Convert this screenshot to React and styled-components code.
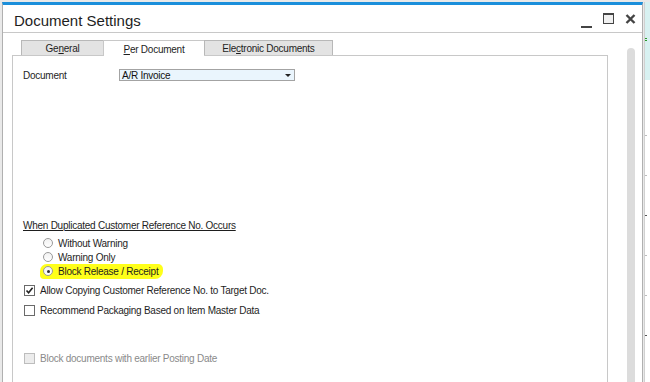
import React from "react";
import styled, { createGlobalStyle, css } from "styled-components";

const GlobalStyle = createGlobalStyle`
  html, body {
    margin: 0;
    padding: 0;
    background: #e9e9e9;
    font-family: "Liberation Sans", Arial, sans-serif;
  }
`;

const Page = styled.div`
  display: flex;
  width: 650px;
  height: 382px;
  padding: 2px 0 0 2px;
  box-sizing: border-box;
  overflow: hidden;
`;

const Window = styled.div`
  width: 641px;
  flex-shrink: 0;
  background: #fff;
  border-top: 3px solid #1b8fdb;
  border-left: 1px solid #b0b0b0;
  border-right: 1px solid #b0b0b0;
  box-sizing: border-box;
  display: flex;
  flex-direction: column;
`;

const TitleBar = styled.div`
  height: 27px;
  display: flex;
  align-items: center;
  padding: 0 0 0 11px;
  border-bottom: 1px solid #c8c8c8;
`;

const Title = styled.div`
  flex: 1;
  font-size: 15px;
  color: #1e1e1e;
  padding-top: 3px;
`;

const Controls = styled.div`
  display: flex;
  align-items: center;
  gap: 11px;
  margin-right: 6px;
`;

const Minimize = styled.div`
  width: 11px;
  height: 12px;
  border-bottom: 2px solid #444;
  box-sizing: border-box;
  margin-top: 6px;
`;

const Maximize = styled.div`
  width: 11px;
  height: 11px;
  border: 1.5px solid #444;
  border-top-width: 2px;
  background: #f0f0f0;
  box-sizing: border-box;
`;

const Body = styled.div`
  flex: 1;
  display: flex;
  min-height: 0;
`;

const Main = styled.div`
  width: 596px;
  margin-left: 9px;
  display: flex;
  flex-direction: column;
`;

const TabRow = styled.div`
  display: flex;
  padding-left: 9px;
  margin-top: 7px;
  position: relative;
  z-index: 1;
`;

const Tab = styled.div`
  width: ${(p) => p.w}px;
  height: 15px;
  box-sizing: border-box;
  border: 1px solid #b8b8b8;
  border-bottom: none;
  margin-left: -1px;
  background: #e3e3e3;
  font-size: 10px;
  letter-spacing: -0.25px;
  color: #1e1e1e;
  display: flex;
  align-items: center;
  justify-content: center;
  padding-top: 1px;
  ${(p) =>
    p.active &&
    css`
      background: #fff;
      height: 16px;
      margin-bottom: -1px;
      border-color: #c8c8c8;
    `}
  &:first-child {
    margin-left: 0;
  }
`;

const Panel = styled.div`
  flex: 1;
  border: 1px solid #c8c8c8;
  border-bottom: none;
  padding: 13px 0 0 10px;
  font-size: 10px;
  letter-spacing: -0.25px;
  color: #1e1e1e;
`;

const FieldRow = styled.div`
  display: flex;
  align-items: center;
  height: 12px;
`;

const Label = styled.div`
  width: 96px;
`;

const Select = styled.div`
  width: 176px;
  height: 12px;
  box-sizing: border-box;
  border: 1px solid #a3a3a3;
  background: #eaf5fd;
  display: flex;
  align-items: center;
  justify-content: space-between;
  padding: 0 3px 0 2px;
  color: #111;
`;

const Arrow = styled.span`
  width: 0;
  height: 0;
  border-left: 3px solid transparent;
  border-right: 3px solid transparent;
  border-top: 3px solid #222;
`;

const Heading = styled.div`
  margin-top: 139px;
  height: 12px;
  line-height: 12px;
  text-decoration: underline;
`;

const OptionRow = styled.div`
  display: flex;
  align-items: center;
  height: 14px;
  gap: 5px;
  margin-top: ${(p) => p.top || 0}px;
  margin-left: ${(p) => p.indent || 0}px;
  color: ${(p) => (p.disabled ? "#8a8a8a" : "#1e1e1e")};
`;

const Highlight = styled.div`
  display: inline-flex;
  align-items: center;
  gap: 5px;
  height: 15px;
  margin-left: -3px;
  padding: 0 5px 0 3px;
  background: #ffff1a;
  border-radius: 7px 5px 8px 4px;
`;

const Radio = styled.span`
  width: 10px;
  height: 10px;
  border-radius: 50%;
  border: 1px solid #9a9a9a;
  box-sizing: border-box;
  background: linear-gradient(#f2f2f2, #fff);
  display: flex;
  align-items: center;
  justify-content: center;
  &::after {
    content: "";
    width: 3px;
    height: 3px;
    border-radius: 50%;
    background: ${(p) => (p.checked ? "#333" : "transparent")};
  }
`;

const Box = styled.span`
  width: 11px;
  height: 11px;
  margin-left: 1px;
  box-sizing: border-box;
  border: 1px solid ${(p) => (p.disabled ? "#bdbdbd" : "#6a6a6a")};
  background: ${(p) => (p.disabled ? "#ececec" : "#fff")};
  display: flex;
  align-items: center;
  justify-content: center;
`;

const Scrollbar = styled.div`
  width: 8px;
  margin: 15px 0 0 19px;
  background: #dcdcdc;
  border-radius: 4px 4px 0 0;
`;

const Neighbour = styled.div`
  flex: 1;
  display: flex;
  flex-direction: column;
  border-left: 1px solid #d0d0d0;
  margin-left: 1px;
`;

const NeighbourTop = styled.div`
  height: 78px;
  background: #d8f1f1;
  position: relative;
`;

const NeighbourRest = styled.div`
  flex: 1;
  background: #fff;
  position: relative;
`;

const Tick = styled.div`
  position: absolute;
  left: 0;
  top: ${(p) => p.y}px;
  width: 2px;
  height: 1px;
  background: ${(p) => p.c || "#bbb"};
`;

function CloseIcon() {
  return (
    <svg width="11" height="10" viewBox="0 0 11 10">
      <path d="M1.5 1 L9.5 9 M9.5 1 L1.5 9" stroke="#444" strokeWidth="2.4" />
    </svg>
  );
}

function Check() {
  return (
    <svg width="9" height="9" viewBox="0 0 9 9">
      <path d="M1.5 4.5 L3.6 6.8 L7.6 1.8" fill="none" stroke="#222" strokeWidth="1.6" />
    </svg>
  );
}

export default function App() {
  return (
    <>
      <GlobalStyle />
      <Page>
        <Window>
          <TitleBar>
            <Title>Document Settings</Title>
            <Controls>
              <Minimize />
              <Maximize />
              <CloseIcon />
            </Controls>
          </TitleBar>
          <Body>
            <Main>
              <TabRow>
                <Tab w={83}>
                  <span>
                    Ge<u>n</u>eral
                  </span>
                </Tab>
                <Tab w={102} active>
                  <span>
                    <u>P</u>er Document
                  </span>
                </Tab>
                <Tab w={129}>
                  <span>
                    Ele<u>c</u>tronic Documents
                  </span>
                </Tab>
              </TabRow>
              <Panel>
                <FieldRow>
                  <Label>Document</Label>
                  <Select>
                    <span>A/R Invoice</span>
                    <Arrow />
                  </Select>
                </FieldRow>
                <Heading>When Duplicated Customer Reference No. Occurs</Heading>
                <OptionRow top={4} indent={20}>
                  <Radio />
                  <span>Without Warning</span>
                </OptionRow>
                <OptionRow indent={20}>
                  <Radio />
                  <span>Warning Only</span>
                </OptionRow>
                <OptionRow indent={20}>
                  <Highlight>
                    <Radio checked />
                    <span>Block Release / Receipt</span>
                  </Highlight>
                </OptionRow>
                <OptionRow top={5}>
                  <Box>
                    <Check />
                  </Box>
                  <span>Allow Copying Customer Reference No. to Target Doc.</span>
                </OptionRow>
                <OptionRow top={6}>
                  <Box />
                  <span>Recommend Packaging Based on Item Master Data</span>
                </OptionRow>
                <OptionRow top={34} disabled>
                  <Box disabled />
                  <span>Block documents with earlier Posting Date</span>
                </OptionRow>
              </Panel>
            </Main>
            <Scrollbar />
          </Body>
        </Window>
        <Neighbour>
          <NeighbourTop>
            <Tick y={36} c="#2a9a2a" />
            <Tick y={38} c="#2a9a2a" />
          </NeighbourTop>
          <NeighbourRest>
            <Tick y={55} />
            <Tick y={95} />
            <Tick y={135} c="#555" />
            <Tick y={175} />
            <Tick y={215} />
            <Tick y={255} c="#555" />
          </NeighbourRest>
        </Neighbour>
      </Page>
    </>
  );
}
